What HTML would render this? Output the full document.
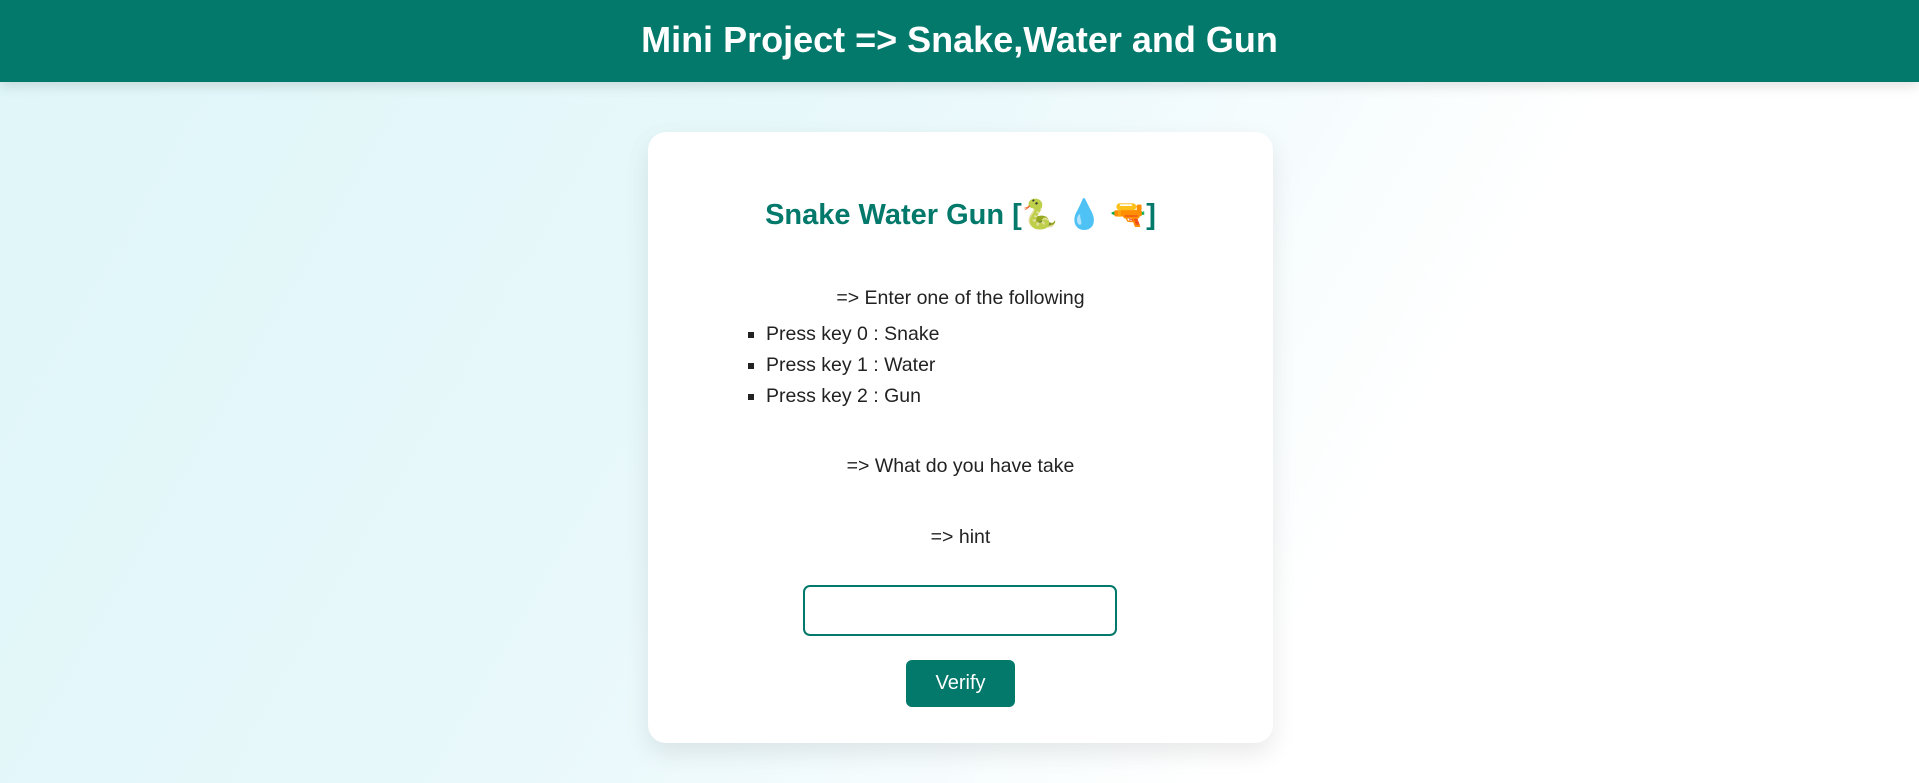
<!DOCTYPE html>
<html><head><meta charset="utf-8"><style>
*{box-sizing:border-box;margin:0;padding:0}
html,body{width:1919px;height:783px;overflow:hidden}
body{font-family:"Liberation Sans",Arial,sans-serif;background:linear-gradient(120deg,#dff6f8 0%,#e8f8fb 40%,#ffffff 70%,#ffffff 100%);position:relative}
header{position:absolute;left:0;top:0;width:1919px;height:82px;background:#02796b;box-shadow:0 4px 12px rgba(0,0,0,.12);color:#fff;font-weight:bold;font-size:36px;text-align:center;line-height:80px}
.card{position:absolute;left:648px;top:132px;width:625px;height:611px;background:#fff;border-radius:18px;box-shadow:0 10px 25px rgba(0,0,0,.09)}
.t{position:absolute;left:0;width:100%;text-align:center;color:#222;font-size:19.5px}
h2{position:absolute;top:66px;width:100%;text-align:center;color:#02796b;font-size:29px;font-weight:bold}
ul{position:absolute;left:118px;top:187px;list-style:square;font-size:19.5px;color:#222}
li{height:31px;line-height:31px;margin-left:0}
input{position:absolute;left:155px;top:453px;width:314px;height:51px;border:2px solid #02796b;border-radius:7px;outline:none}
button{position:absolute;left:258px;top:528px;width:109px;height:47px;border:none;border-radius:6px;background:#02796b;color:#fff;font-family:"Liberation Sans",Arial,sans-serif;font-size:20px}
</style></head><body>
<header>Mini Project =&gt; Snake,Water and Gun</header>
<div class="card">
<h2>Snake Water Gun [🐍 💧 🔫]</h2>
<div class="t" style="top:155px">=&gt; Enter one of the following</div>
<ul><li>Press key 0 : Snake</li><li>Press key 1 : Water</li><li>Press key 2 : Gun</li></ul>
<div class="t" style="top:323px">=&gt; What do you have take</div>
<div class="t" style="top:394px">=&gt; hint</div>
<input type="text">
<button>Verify</button>
</div>
</body></html>
